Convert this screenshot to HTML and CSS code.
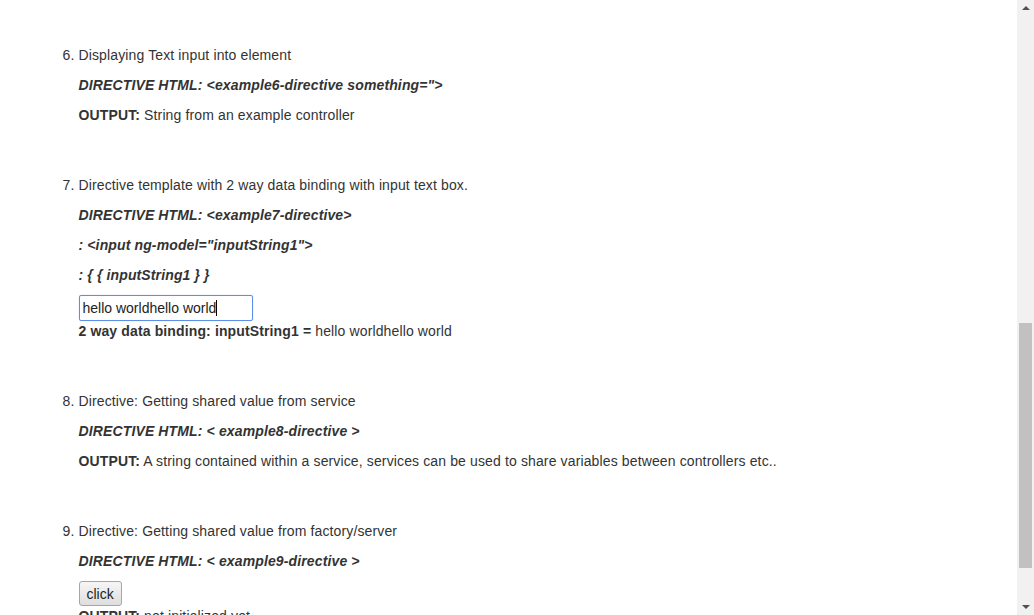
FILE: index.html
```html
<!DOCTYPE html>
<html>
<head>
<meta charset="utf-8">
<link rel="stylesheet" href="styles.css">
</head>
<body>
<div class="page">
  <div class="container">
    <ol class="examples" start="6">
      <li class="item">
        <p>Displaying Text input into element</p>
        <p class="code"><b><i>DIRECTIVE HTML: &lt;example6-directive something="&gt;</i></b></p>
        <p><b>OUTPUT:</b> String from an example controller</p>
      </li>
      <li class="item">
        <p>Directive template with 2 way data binding with input text box.</p>
        <p class="code"><b><i>DIRECTIVE HTML: &lt;example7-directive&gt;</i></b></p>
        <p class="code"><b><i>: &lt;input ng-model="inputString1"&gt;</i></b></p>
        <p class="code"><b><i>: { { inputString1 } }</i></b></p>
        <div class="field"><span class="field-text">hello worldhello world</span><span class="caret"></span></div>
        <p class="binding"><b>2 way data binding: inputString1 = </b>hello worldhello world</p>
      </li>
      <li class="item">
        <p>Directive: Getting shared value from service</p>
        <p class="code"><b><i>DIRECTIVE HTML: &lt; example8-directive &gt;</i></b></p>
        <p><b>OUTPUT:</b> A string contained within a service, services can be used to share variables between controllers etc..</p>
      </li>
      <li class="item">
        <p>Directive: Getting shared value from factory/server</p>
        <p class="code"><b><i>DIRECTIVE HTML: &lt; example9-directive &gt;</i></b></p>
        <button class="btn" type="button">click</button>
        <p class="after-btn"><b>OUTPUT:</b> not initialized yet</p>
      </li>
    </ol>
  </div>
</div>
<div class="scrollbar">
  <div class="arrow arrow-up"></div>
  <div class="thumb"></div>
  <div class="arrow arrow-down"></div>
</div>
</body>
</html>
```
FILE: styles.css
```css
html, body {
  margin: 0;
  padding: 0;
  height: 100%;
  overflow: hidden;
  background: #fff;
}
body {
  font-family: "Liberation Sans", Arial, Helvetica, sans-serif;
  font-size: 14px;
  line-height: 20px;
  color: #333;
  letter-spacing: 0.13px;
}
.page {
  width: 1017px;
}
.container {
  width: 970px;
  margin: 0 auto;
  padding: 45px 15px 0;
  box-sizing: border-box;
}
.examples {
  margin: 0;
  padding-left: 40px;
}
.item {
  padding-bottom: 40px;
}
.item p {
  margin: 0 0 10px;
}
.field {
  width: 174px;
  height: 26px;
  box-sizing: border-box;
  border: 1px solid #5e8fe6;
  border-radius: 2px;
  box-shadow: 0 0 1px 0 #8fb4f0;
  padding: 0 3px;
  display: flex;
  align-items: center;
  color: #222;
  letter-spacing: 0;
}
.caret {
  display: inline-block;
  width: 1px;
  height: 16px;
  background: #000;
}
.btn {
  font-family: "Liberation Sans", Arial, sans-serif;
  font-size: 14px;
  color: #222;
  height: 25px;
  padding: 0 7px;
  margin: 1px 0 0;
  border: 1px solid #a6a6a6;
  border-radius: 3px;
  background: linear-gradient(#f6f6f6, #dedede);
  display: block;
}
.item .after-btn {
  margin-top: 0;
}
.scrollbar {
  position: fixed;
  top: 0;
  right: 0;
  width: 17px;
  height: 100%;
  background: #f1f1f1;
}
.thumb {
  position: absolute;
  left: 2px;
  width: 13px;
  top: 323px;
  height: 245px;
  background: #c1c1c1;
}
.arrow {
  position: absolute;
  left: 5px;
  width: 0;
  height: 0;
  border-left: 4px solid transparent;
  border-right: 4px solid transparent;
}
.arrow-up {
  top: 6px;
  border-bottom: 4px solid #505050;
}
.arrow-down {
  bottom: 6px;
  border-top: 4px solid #505050;
}
```
